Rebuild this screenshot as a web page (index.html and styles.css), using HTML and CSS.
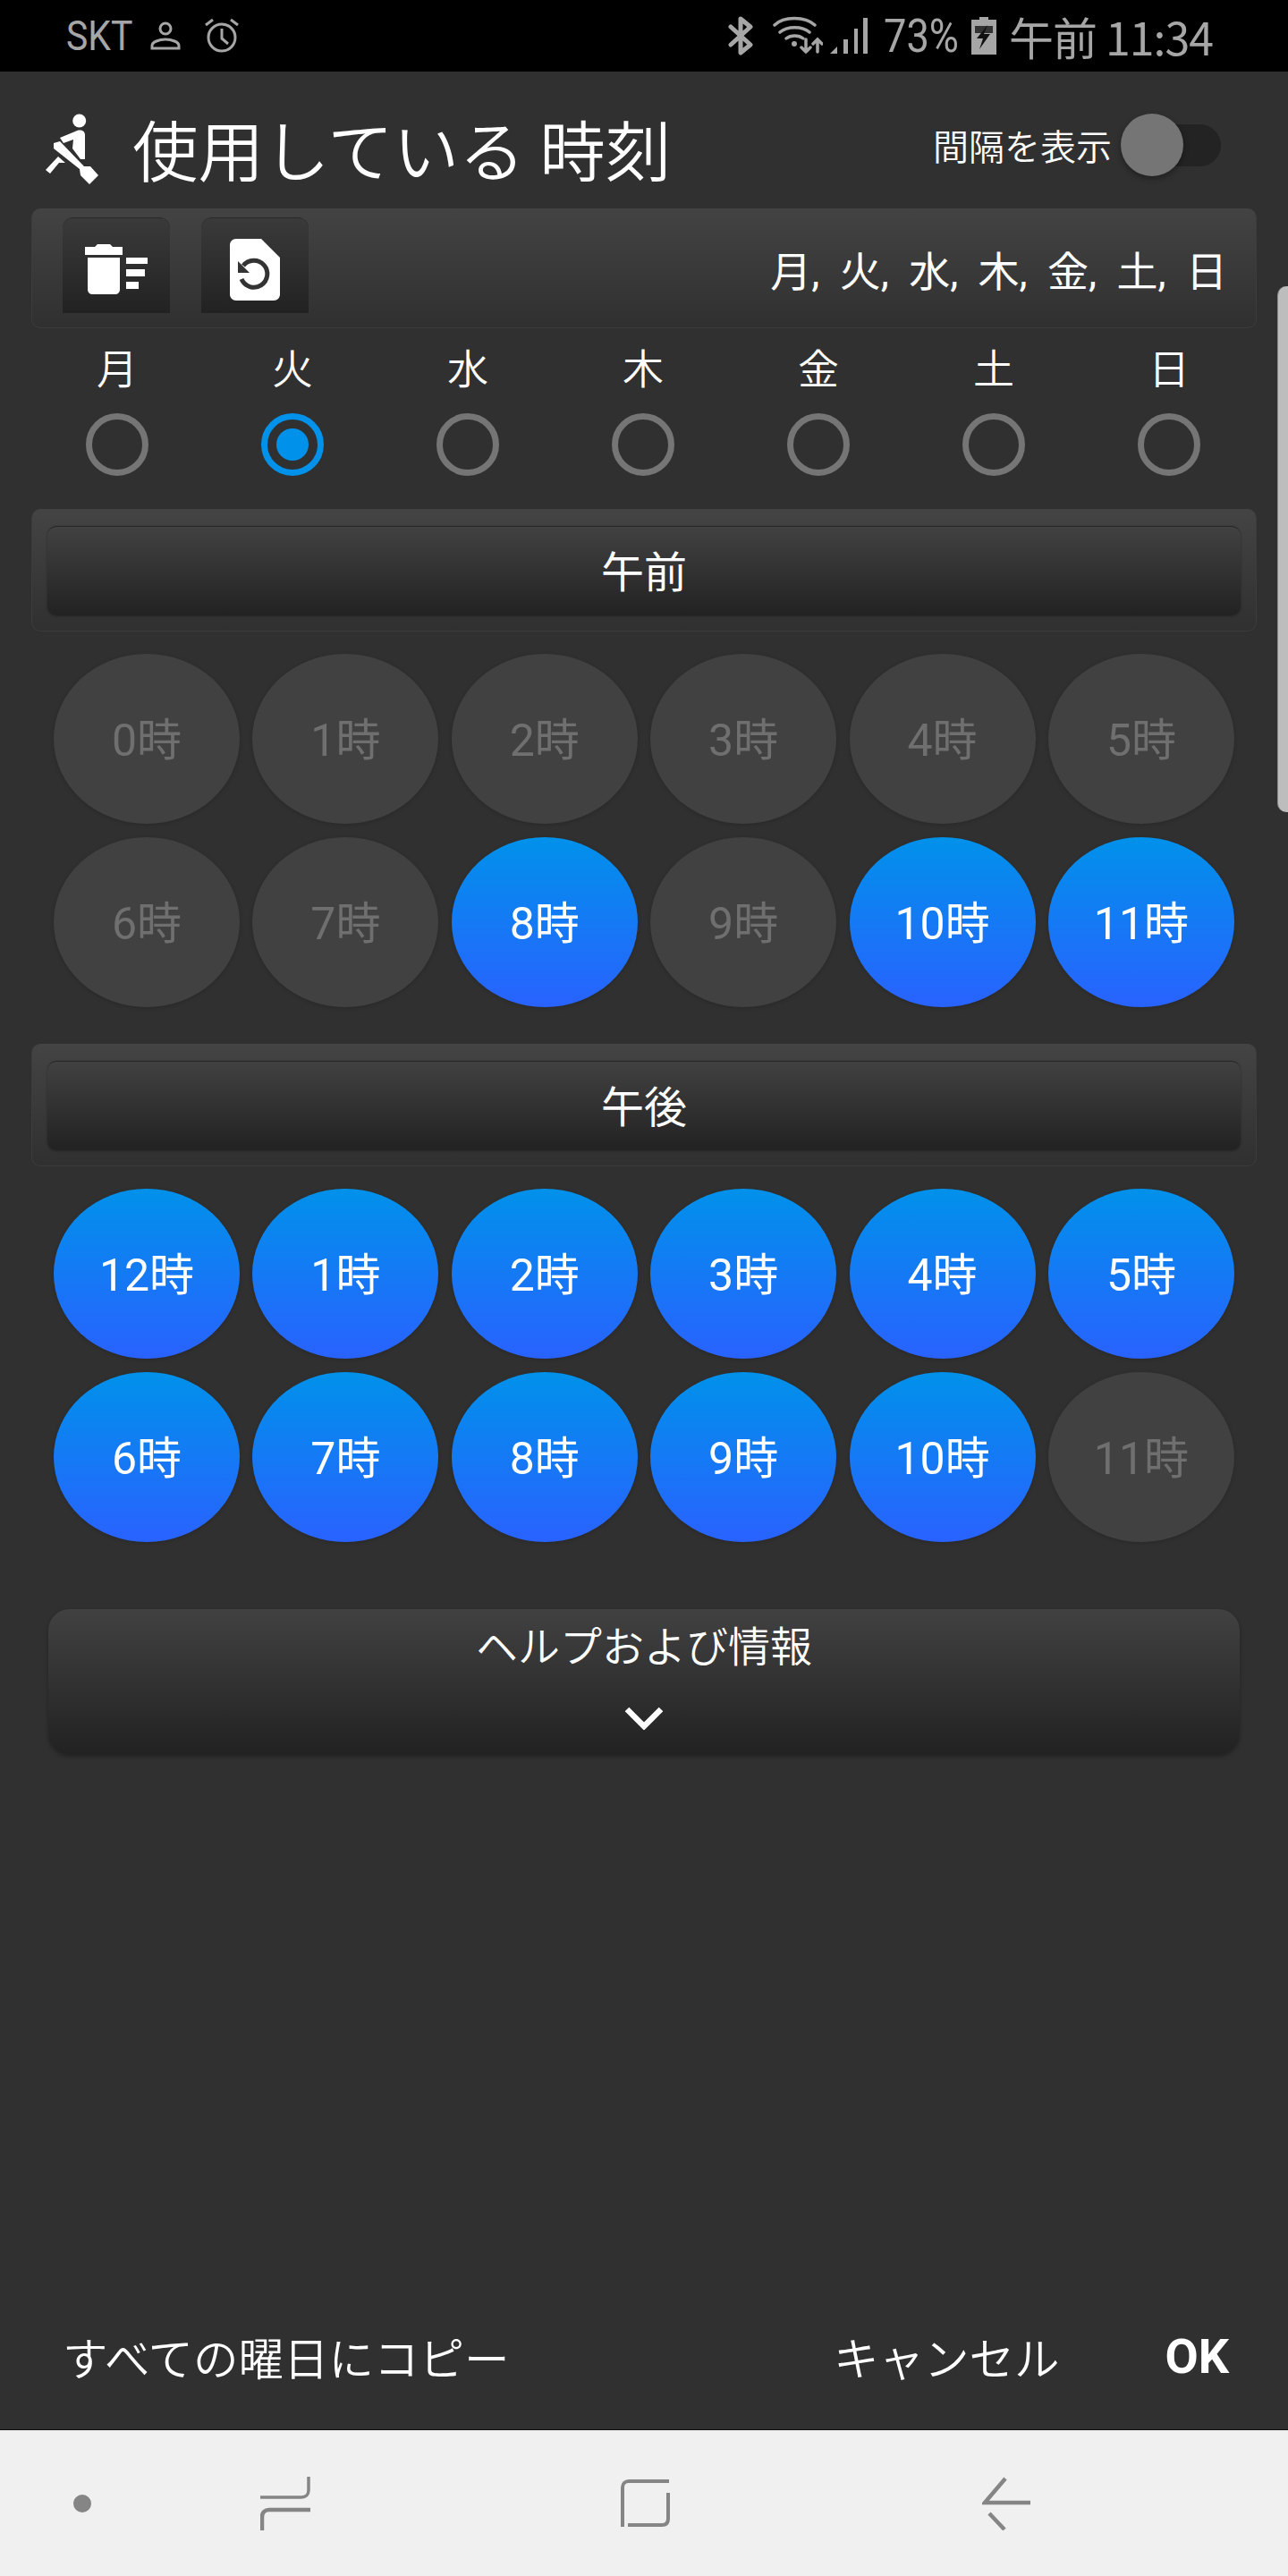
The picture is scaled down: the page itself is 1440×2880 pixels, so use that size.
FILE: index.html
```html
<!DOCTYPE html>
<html lang="ja">
<head>
    <meta charset="UTF-8">
    <meta name="viewport" content="width=device-width, initial-scale=1.0">
    <title>使用している 時刻</title>
    <link rel="stylesheet" href="styles.css">
</head>
<body>
    <div class="statusbar">
        <div class="status-left">
            <span class="carrier">SKT</span>
            <svg class="st-person" width="34" height="32" viewBox="0 0 34 32" fill="none" stroke="#a6a6a6" stroke-width="3">
                <circle cx="17" cy="8" r="6"/>
                <path d="M2 30v-3c0-4 8-7 15-7s15 3 15 7v3z"/>
            </svg>
            <svg width="42" height="42" viewBox="0 0 42 42" fill="none" stroke="#a6a6a6" stroke-width="3">
                <circle cx="21" cy="23" r="15"/>
                <path d="M21 13v11l7 6M3 9l8-6M39 9l-8-6"/>
            </svg>
        </div>
        <div class="status-right">
            <svg width="28" height="44" viewBox="0 0 28 44" fill="none" stroke="#a6a6a6" stroke-width="5" stroke-linejoin="round" stroke-linecap="round">
                <path d="M3 12l22 20-11 9V3l11 9L3 32"/>
            </svg>
            <svg class="wifi" width="56" height="44" viewBox="0 0 56 44" fill="none" stroke="#a6a6a6" stroke-width="3.500" stroke-linecap="round">
                <path d="M2 10C12 0 36 0 47 10M8 18c8-7 25-7 33 0M15 25c5-4 14-4 19 0"/>
                <circle cx="24" cy="31" r="3" fill="#a6a6a6" stroke="none"/>
                <path d="M37 26v14M32 35l5 5 5-5M50 40V26M45 31l5-5 5 5"/>
            </svg>
            <svg class="signal" width="42" height="42" viewBox="0 0 42 42" fill="#a6a6a6">
                <path d="M0 41L8 33V41zM15 25h5v16h-5zM27 13h4v28h-4zM37 1h5v40h-5z"/>
            </svg>
            <span class="pct">73%</span>
            <svg width="28" height="42" viewBox="0 0 28 42">
                <path d="M9 0h10v3h9v39H0V3h9z" fill="#a6a6a6"/>
                <path d="M4 10h20v8H4z" fill="#333"/>
                <path d="M18 9L6 24h7l-4 12 12-17h-7z" fill="#111"/>
            </svg>
            <span class="clock">午前 11:34</span>
        </div>
    </div>

    <div class="screen">
        <div class="titlebar">
            <svg class="title-icon" width="60" height="80" viewBox="9 17 60 80" fill="#fff">
                <circle cx="47.700" cy="25" r="7.500"/>
                <path d="M43 37c3-2 11-3 11 4v27l-5 0-9-12 1-10-11 4-4-6z"/>
                <path d="M19 50l7-2 27 28 7 0 9 10-10 10-10-10-1-7-29-23z"/>
                <path d="M10 80l14-15 8 7-7 0-10 12z"/>
            </svg>
            <h1>使用している 時刻</h1>
            <div class="interval">
                <span>間隔を表示</span>
                <div class="switch"><div class="knob"></div></div>
            </div>
        </div>

        <div class="toolbar">
            <div class="tool-btn">
                <svg width="70" height="56" viewBox="0 0 70 56" fill="#fff">
                    <path d="M14 0h14l3 3h11v9H0V3h11z"/>
                    <path d="M3 15h36v35c0 4-2 6-6 6H9c-4 0-6-2-6-6z"/>
                    <path d="M46 15h24v7H46zM46 28h21v8H46zM46 42h14v8H46z"/>
                </svg>
            </div>
            <div class="tool-btn">
                <svg width="56" height="69" viewBox="0 0 56 69">
                    <path d="M7 0h28l21 21v41c0 4-3 7-7 7H7c-4 0-7-3-7-7V7c0-4 3-7 7-7z" fill="#fff"/>
                    <path d="M15 30A15 15 0 1 1 13 45" fill="none" stroke="#333" stroke-width="5"/>
                    <path d="M9 25v13h13z" fill="#333"/>
                </svg>
            </div>
            <div class="day-summary">月, 火, 水, 木, 金, 土, 日</div>
        </div>

        <div class="days">
            <div class="day"><span>月</span><div class="radio"></div></div>
            <div class="day"><span>火</span><div class="radio on"></div></div>
            <div class="day"><span>水</span><div class="radio"></div></div>
            <div class="day"><span>木</span><div class="radio"></div></div>
            <div class="day"><span>金</span><div class="radio"></div></div>
            <div class="day"><span>土</span><div class="radio"></div></div>
            <div class="day"><span>日</span><div class="radio"></div></div>
        </div>

        <div class="section">
            <div class="section-btn">午前</div>
        </div>
        <div class="hours">
            <div class="hour">0時</div>
            <div class="hour">1時</div>
            <div class="hour">2時</div>
            <div class="hour">3時</div>
            <div class="hour">4時</div>
            <div class="hour">5時</div>
            <div class="hour">6時</div>
            <div class="hour">7時</div>
            <div class="hour on">8時</div>
            <div class="hour">9時</div>
            <div class="hour on">10時</div>
            <div class="hour on">11時</div>
        </div>

        <div class="section">
            <div class="section-btn">午後</div>
        </div>
        <div class="hours">
            <div class="hour on">12時</div>
            <div class="hour on">1時</div>
            <div class="hour on">2時</div>
            <div class="hour on">3時</div>
            <div class="hour on">4時</div>
            <div class="hour on">5時</div>
            <div class="hour on">6時</div>
            <div class="hour on">7時</div>
            <div class="hour on">8時</div>
            <div class="hour on">9時</div>
            <div class="hour on">10時</div>
            <div class="hour">11時</div>
        </div>

        <div class="help">
            <span>ヘルプおよび情報</span>
            <svg width="44" height="26" viewBox="0 0 44 26" fill="none" stroke="#fff" stroke-width="6.500">
                <path d="M3 3l19 19L41 3"/>
            </svg>
        </div>

        <div class="footer">
            <span class="copy">すべての曜日にコピー</span>
            <span class="cancel">キャンセル</span>
            <span class="ok">OK</span>
        </div>
    </div>

    <div class="navbar">
        <div class="nav-dot"></div>
        <svg class="nav-recent" width="56" height="60" viewBox="0 0 56 60" fill="none" stroke="#858585" stroke-width="4">
            <path d="M54 0v15c0 5-3 8-8 8H0" stroke-width="3.500"/>
            <path d="M56 37H10c-5 0-8 3-8 8v15" stroke-width="4.500"/>
        </svg>
        <svg class="nav-home" width="56" height="56" viewBox="0 0 56 56" fill="none" stroke="#858585" stroke-width="4">
            <path d="M54 3H9C5 3 2 6 2 10v44"/>
            <path d="M8 52h38c5 0 7-3 7-7V16"/>
        </svg>
        <svg class="nav-back" width="54" height="60" viewBox="0 0 54 60" fill="none" stroke="#858585" stroke-width="4.500">
            <path d="M26 2L3 29h51M8 41l17 18"/>
        </svg>
    </div>

    <div class="scroll-thumb"></div>
</body>
</html>
```

FILE: styles.css
```css
:root {
    --bg: #303030;
    --grey-text: #a6a6a6;
    --blue: #0091ea;
    --off-circle: #414141;
}

* {
    margin: 0;
    padding: 0;
    box-sizing: border-box;
}

body {
    position: relative;
    width: 1440px;
    height: 2880px;
    overflow: hidden;
    display: flex;
    flex-direction: column;
    background: var(--bg);
    color: #fff;
    font-family: "Noto Sans CJK JP", Roboto, sans-serif;
}

/* status bar */
.statusbar {
    height: 80px;
    background: #000;
    color: var(--grey-text);
    display: flex;
    justify-content: space-between;
    align-items: center;
    padding: 0 84px 0 74px;
    flex-shrink: 0;
}

.status-left,
.status-right {
    display: flex;
    align-items: center;
}

.carrier {
    font-family: Roboto, sans-serif;
    font-size: 46px;
    width: 94px;
    transform-origin: left center;
    transform: scaleX(0.89);
}

.st-person {
    margin-right: 25px;
}

.wifi {
    margin-left: 22px;
}

.signal {
    margin-left: 8px;
}

.pct {
    display: inline-block;
    width: 82px;
    margin: 0 16px 0 18px;
    font-family: Roboto, sans-serif;
    font-size: 52px;
    transform-origin: left center;
    transform: scaleX(0.87);
}

.clock {
    font-size: 50px;
    margin-left: 14px;
    letter-spacing: -1px;
}

/* main */
.screen {
    flex: 1;
    display: flex;
    flex-direction: column;
}

.titlebar {
    height: 153px;
    display: flex;
    align-items: center;
    padding: 11px 75px 0 50px;
    flex-shrink: 0;
}

.title-icon {
    margin: 10px 38px 0 0;
}

.titlebar h1 {
    margin-top: 5px;
    font-size: 73.500px;
    font-weight: 350;
    flex: 1;
}

.interval {
    display: flex;
    align-items: center;
    gap: 14px;
    font-size: 40px;
    font-weight: 350;
}

.switch {
    position: relative;
    width: 108px;
    height: 47px;
    background: #232323;
    border-radius: 24px;
}

.knob {
    position: absolute;
    left: -4px;
    top: -12px;
    width: 70px;
    height: 70px;
    border-radius: 50%;
    background: #757575;
    box-shadow: 0 3px 6px rgba(0,0,0,0.35);
}

.toolbar {
    height: 134px;
    margin: 0 35px;
    border-radius: 10px;
    background: linear-gradient(#434343, #303030);
    border: 1px solid #3b3b3b;
    border-top: none;
    display: flex;
    align-items: flex-start;
    padding: 10px 34px 0;
    gap: 35px;
    flex-shrink: 0;
}

.tool-btn {
    width: 120px;
    height: 107px;
    padding-top: 8px;
    border-radius: 12px 12px 0 0;
    border-top: 1px solid #2a2a2a;
    background: linear-gradient(#3a3a3a, #222);
    display: flex;
    align-items: center;
    justify-content: center;
}

.day-summary {
    margin-left: auto;
    margin-right: -2px;
    align-self: center;
    margin-top: -10px;
    font-family: Roboto, "Noto Sans CJK JP", sans-serif;
    font-size: 46px;
    font-weight: 400;
    word-spacing: 11px;
}

.days {
    height: 202px;
    margin: 0 33px;
    display: grid;
    grid-template-columns: repeat(7, 196px);
    flex-shrink: 0;
}

.day {
    display: flex;
    flex-direction: column;
    align-items: center;
    font-size: 46px;
    font-weight: 350;
    padding-top: 10px;
}

.day span {
    height: 64px;
    line-height: 64px;
}

.radio {
    width: 70px;
    height: 70px;
    margin-top: 21px;
    border: 7px solid #757575;
    border-radius: 50%;
}

.radio.on {
    border-color: var(--blue);
    position: relative;
}

.radio.on::after {
    content: "";
    position: absolute;
    top: 10px;
    left: 10px;
    width: 36px;
    height: 36px;
    background: var(--blue);
    border-radius: 50%;
}

.section {
    height: 137px;
    margin: 0 35px;
    padding: 19px 17px 0;
    border-radius: 10px;
    background: linear-gradient(#444, #303030);
    border: 1px solid #3b3b3b;
    border-top: none;
    flex-shrink: 0;
}

.section-btn {
    height: 100px;
    padding-bottom: 6px;
    border-radius: 10px;
    background: linear-gradient(#414141, #222);
    box-shadow: 0 1px 3px rgba(0,0,0,0.3);
    border-top: 1px solid #262626;
    font-size: 48px;
    font-weight: 400;
    display: flex;
    align-items: center;
    justify-content: center;
}

.hours {
    display: grid;
    grid-template-columns: repeat(6, 208px);
    grid-auto-rows: 190px;
    column-gap: 14.400px;
    row-gap: 15px;
    margin: 25px 0 41px 60px;
    flex-shrink: 0;
}

.hour {
    padding-bottom: 6px;
    border-radius: 50%;
    background: var(--off-circle);
    color: #6f6f6f;
    font-family: Roboto, "Noto Sans CJK JP", sans-serif;
    font-size: 50px;
    display: flex;
    align-items: center;
    justify-content: center;
    box-shadow: 0 1px 4px rgba(0,0,0,0.18);
}

.hour.on {
    background: linear-gradient(#0091ea, #2962ff);
    color: #fff;
}

.help {
    height: 163px;
    margin: 34px 54px 0;
    border-radius: 24px;
    background: linear-gradient(#414141, #222);
    box-shadow: 0 2px 4px rgba(0,0,0,0.3);
    display: flex;
    flex-direction: column;
    align-items: center;
    font-size: 47px;
    font-weight: 350;
    padding-top: 7px;
    flex-shrink: 0;
}

.help span {
    height: 64px;
    line-height: 64px;
}

.help svg {
    margin-top: 38px;
}

.footer {
    margin-top: auto;
    height: 156px;
    padding: 0 66px 8px 70px;
    display: flex;
    align-items: center;
    font-size: 50.500px;
    font-weight: 350;
    flex-shrink: 0;
}

.copy {
    margin-right: auto;
}

.cancel {
    margin-right: 118px;
}

.ok {
    font-family: Roboto, sans-serif;
    font-size: 54px;
    font-weight: 700;
}

/* nav bar */
.navbar {
    height: 164px;
    background: #f0f0f0;
    border-top: 1px solid #111;
    display: flex;
    align-items: center;
    padding-left: 82px;
    flex-shrink: 0;
}

.nav-dot {
    width: 20px;
    height: 20px;
    border-radius: 50%;
    background: #858585;
}

.nav-recent {
    margin-left: 189px;
}

.nav-home {
    margin-left: 347px;
}

.nav-back {
    margin-left: 348px;
}

.scroll-thumb {
    position: absolute;
    right: 0;
    top: 320px;
    width: 12px;
    height: 588px;
    background: #bdbdbd;
    border-left: 1px solid #8a8a8a;
    border-radius: 10px 0 0 10px;
}
```
